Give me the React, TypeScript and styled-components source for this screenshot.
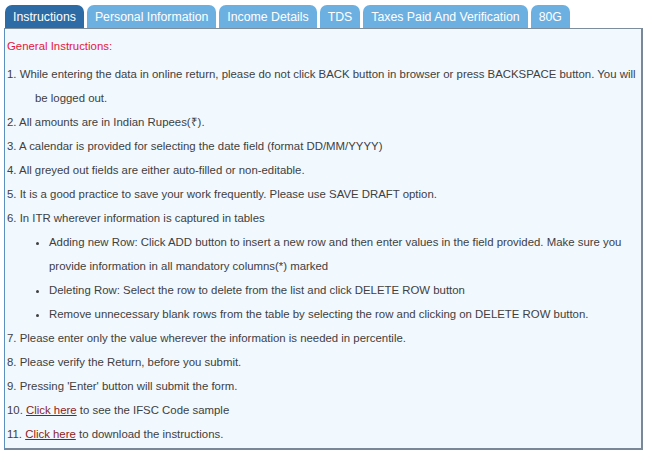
import styled, { createGlobalStyle } from 'styled-components';

const GlobalStyle = createGlobalStyle`
    body {
        margin: 0;
        background: #fff;
        font-family: 'Liberation Sans', Arial, sans-serif;
    }
`;

const Page = styled.div`
    width: 650px;
    padding: 5px 0 0 4px;
    box-sizing: border-box;
`;

const TabBar = styled.div`
    display: flex;
    gap: 3px;
    padding-left: 1px;
    height: 23px;
`;

const Tab = styled.div<{ $active?: boolean }>`
    display: flex;
    align-items: center;
    height: 23px;
    padding: 0 8px;
    border-radius: 7px 7px 0 0;
    background: ${({ $active }) => ($active ? '#2c6ba6' : '#6cb0e2')};
    color: #fff;
    font-size: 12.3px;
    white-space: nowrap;
`;

const Panel = styled.div`
    width: 639px;
    box-sizing: border-box;
    background: #f1f8fe;
    border-top: 1px solid #7e8d9c;
    border-left: 1px solid #5d8fbf;
    border-right: 2px solid #7a8797;
    border-bottom: 2px solid #7a8797;
    padding: 5px 0 2px 2px;
    color: #404040;
    font-size: 11.4px;
    line-height: 24px;
`;

const Heading = styled.div`
    color: #e3163c;
    margin-bottom: 4px;
`;

const Item = styled.div`
    padding-left: 28px;
    text-indent: -28px;
`;

const Bullets = styled.ul`
    margin: 0;
    padding-left: 42px;
    list-style: disc;
    text-indent: 0;
`;

const Link = styled.a`
    color: #8c1c1c;
    text-decoration: underline;
`;

const tabs = ['Instructions', 'Personal Information', 'Income Details', 'TDS', 'Taxes Paid And Verification', '80G'];

const App = () => {
    return (
        <Page>
            <GlobalStyle />
            <TabBar>
                {tabs.map((t, i) => (
                    <Tab key={t} $active={i === 0}>
                        {t}
                    </Tab>
                ))}
            </TabBar>
            <Panel>
                <Heading>General Instructions:</Heading>
                <Item>
                    1. While entering the data in online return, please do not click BACK button in browser or press BACKSPACE button. You will be logged out.
                </Item>
                <Item>2. All amounts are in Indian Rupees(&#x20B9;).</Item>
                <Item>3. A calendar is provided for selecting the date field (format DD/MM/YYYY)</Item>
                <Item>4. All greyed out fields are either auto-filled or non-editable.</Item>
                <Item>5. It is a good practice to save your work frequently. Please use SAVE DRAFT option.</Item>
                <Item>6. In ITR wherever information is captured in tables</Item>
                <Bullets>
                    <li>
                        Adding new Row: Click ADD button to insert a new row and then enter values in the field provided. Make sure you provide information in all mandatory columns(*) marked
                    </li>
                    <li>Deleting Row: Select the row to delete from the list and click DELETE ROW button</li>
                    <li>Remove unnecessary blank rows from the table by selecting the row and clicking on DELETE ROW button.</li>
                </Bullets>
                <Item>7. Please enter only the value wherever the information is needed in percentile.</Item>
                <Item>8. Please verify the Return, before you submit.</Item>
                <Item>9. Pressing 'Enter' button will submit the form.</Item>
                <Item>
                    10. <Link href="#">Click here</Link> to see the IFSC Code sample
                </Item>
                <Item>
                    11. <Link href="#">Click here</Link> to download the instructions.
                </Item>
            </Panel>
        </Page>
    );
};

export default App;
